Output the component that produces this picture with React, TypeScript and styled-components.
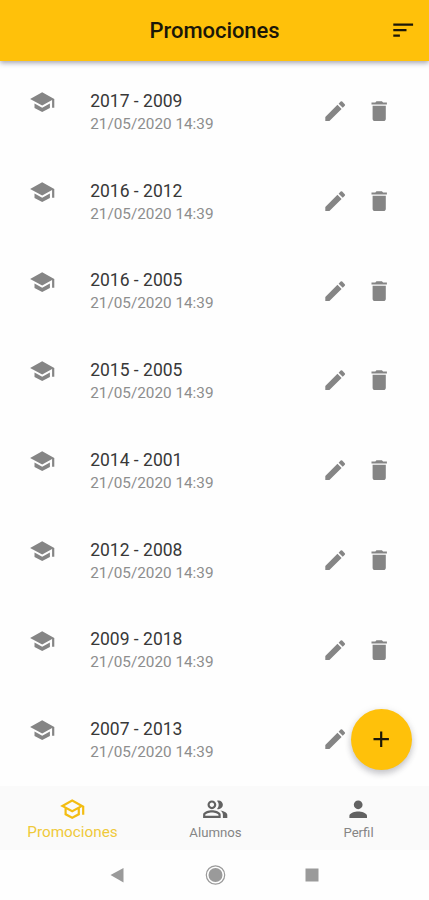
import React from "react";
import styled, { createGlobalStyle } from "styled-components";

const Global = createGlobalStyle`
  *, *::before, *::after { box-sizing: border-box; }
  body { margin: 0; background: #fff; font-family: Roboto, "Liberation Sans", sans-serif; }
  button { border: 0; padding: 0; margin: 0; background: none; font: inherit; color: inherit; }
`;

const Screen = styled.div`
  position: relative;
  display: flex;
  flex-direction: column;
  width: 429px;
  height: 900px;
  overflow: hidden;
  background: #fefefe;
`;

const AppBar = styled.header`
  position: relative;
  z-index: 1;
  flex: none;
  height: 61px;
  padding: 0 12.5px 0 39px;
  display: grid;
  grid-template-columns: 1fr 26.4px;
  align-items: center;
  background: #ffc10a;
  box-shadow: 0 2px 5px rgba(40, 40, 70, 0.42);
  color: #1b1708;
`;

const Title = styled.h1`
  margin: 0;
  text-align: center;
  font-size: 22px;
  font-weight: 500;
  line-height: 26px;
  letter-spacing: -0.05px;
`;

const Icon = styled.svg<{ $size?: number }>`
  display: block;
  flex: none;
  width: ${(p) => p.$size ?? 26.4}px;
  height: ${(p) => p.$size ?? 26.4}px;
  fill: currentColor;
`;

const List = styled.main`
  flex: none;
  height: 724.5px;
  padding-top: 5.2px;
  overflow: hidden;
`;

const Row = styled.article`
  height: 89.75px;
  padding: 23px 36.6px 0 29px;
  display: grid;
  grid-template-columns: 61.2px 1fr auto;
  align-items: start;
  color: #858585;
`;

const Texts = styled.div`
  padding-top: 0.6px;
`;

const Name = styled.div`
  font-size: 17.5px;
  line-height: 22px;
  color: #383838;
`;

const Stamp = styled.div`
  font-size: 15.3px;
  line-height: 24px;
  color: #8d8d8d;
`;

const Actions = styled.div`
  display: flex;
  gap: 17.4px;
  padding-top: 9px;
`;

const Tabs = styled.nav`
  flex: none;
  height: 64px;
  padding: 10.3px 0 0 1px;
  display: grid;
  grid-template-columns: repeat(3, 143px);
  background: #fafafa;
`;

const Tab = styled.button<{ $active?: boolean }>`
  display: flex;
  flex-direction: column;
  align-items: center;
  justify-content: flex-start;
  gap: ${(p) => (p.$active ? 1 : 2)}px;
  color: ${(p) => (p.$active ? "#f3bd12" : "#626262")};
`;

const TabLabel = styled.span<{ $active?: boolean }>`
  font-size: ${(p) => (p.$active ? 15.3 : 13.2)}px;
  line-height: 18px;
  color: ${(p) => (p.$active ? "#efc93a" : "#858585")};
`;

const SystemBar = styled.footer`
  flex: 1;
  display: flex;
  justify-content: center;
  align-items: center;
  gap: 75px;
  color: #9a9a9a;
`;

const Fab = styled.button`
  position: absolute;
  left: 351px;
  top: 709px;
  width: 61px;
  height: 61px;
  border-radius: 50%;
  display: flex;
  align-items: center;
  justify-content: center;
  background: #ffc10a;
  color: #1b1708;
  box-shadow: 0 4px 6px rgba(40, 40, 60, 0.22), 0 1px 8px rgba(0, 0, 0, 0.08);
`;

const paths = {
  school: "M5 13.18v4L12 21l7-3.82v-4L12 17l-7-3.82zM12 3L1 9l11 6 9-4.91V17h2V9L12 3z",
  schoolOutline:
    "M12 3L1 9l4 2.18v6L12 21l7-3.82v-6l2-1.09V17h2V9L12 3zm6.82 6L12 12.72 5.18 9 12 5.28 18.82 9zM17 15.99l-5 2.73-5-2.73v-3.72L12 15l5-2.73v3.72z",
  edit: "M3 17.25V21h3.75L17.81 9.94l-3.75-3.75L3 17.25zM20.71 7.04a.996.996 0 0 0 0-1.41l-2.34-2.34a.996.996 0 0 0-1.41 0l-1.83 1.83 3.75 3.75 1.83-1.83z",
  trash: "M6 19c0 1.1.9 2 2 2h8c1.1 0 2-.9 2-2V7H6v12zM19 4h-3.5l-1-1h-5l-1 1H5v2h14V4z",
  sort: "M3 18h6v-2H3v2zM3 6v2h18V6H3zm0 7h12v-2H3v2z",
  people:
    "M16.67 13.13C18.04 14.06 19 15.32 19 17v3h4v-3c0-2.18-3.57-3.47-6.33-3.87zM15 12c2.21 0 4-1.79 4-4s-1.79-4-4-4c-.47 0-.91.1-1.33.24a5.98 5.98 0 0 1 0 7.52c.42.14.86.24 1.33.24zM9 12c2.21 0 4-1.79 4-4s-1.79-4-4-4-4 1.79-4 4 1.79 4 4 4zm0-6c1.1 0 2 .9 2 2s-.9 2-2 2-2-.9-2-2 .9-2 2-2zM9 13c-2.67 0-8 1.34-8 4v3h16v-3c0-2.66-5.33-4-8-4zm6 5H3v-.99C3.2 16.29 6.3 15 9 15s5.8 1.29 6 2v1z",
  person:
    "M12 12c2.21 0 4-1.79 4-4s-1.79-4-4-4-4 1.79-4 4 1.79 4 4 4zm0 2c-2.67 0-8 1.34-8 4v2h16v-2c0-2.66-5.33-4-8-4z",
  add: "M19 13h-6v6h-2v-6H5v-2h6V5h2v6h6v2z",
};

const Glyph = ({ name, size }: { name: keyof typeof paths; size?: number }) => (
  <Icon viewBox="0 0 24 24" $size={size} aria-hidden="true">
    <path d={paths[name]} />
  </Icon>
);

const promotions = [
  "2017 - 2009",
  "2016 - 2012",
  "2016 - 2005",
  "2015 - 2005",
  "2014 - 2001",
  "2012 - 2008",
  "2009 - 2018",
  "2007 - 2013",
];

const tabs: { label: string; icon: keyof typeof paths; active?: boolean }[] = [
  { label: "Promociones", icon: "schoolOutline", active: true },
  { label: "Alumnos", icon: "people" },
  { label: "Perfil", icon: "person" },
];

export default function App() {
  return (
    <>
      <Global />
      <Screen>
        <AppBar>
          <Title>Promociones</Title>
          <button aria-label="Ordenar">
            <Glyph name="sort" />
          </button>
        </AppBar>
        <List>
          {promotions.map((name) => (
            <Row key={name}>
              <Glyph name="school" />
              <Texts>
                <Name>{name}</Name>
                <Stamp>21/05/2020 14:39</Stamp>
              </Texts>
              <Actions>
                <button aria-label="Editar">
                  <Glyph name="edit" />
                </button>
                <button aria-label="Eliminar">
                  <Glyph name="trash" />
                </button>
              </Actions>
            </Row>
          ))}
        </List>
        <Tabs>
          {tabs.map((t) => (
            <Tab key={t.label} $active={t.active}>
              <Glyph name={t.icon} />
              <TabLabel $active={t.active}>{t.label}</TabLabel>
            </Tab>
          ))}
        </Tabs>
        <SystemBar>
          <Icon viewBox="0 0 22 22" $size={22}>
            <path d="M3.5 11 16.5 4v14.5z" />
          </Icon>
          <Icon viewBox="0 0 22 22" $size={22}>
            <circle cx="11.5" cy="11" r="9.2" fill="none" stroke="currentColor" strokeWidth="1.2" />
            <circle cx="11.5" cy="11" r="7" />
          </Icon>
          <Icon viewBox="0 0 22 22" $size={22}>
            <path d="M4.5 4.5h13v13h-13z" />
          </Icon>
        </SystemBar>
        <Fab aria-label="Añadir">
          <Glyph name="add" />
        </Fab>
      </Screen>
    </>
  );
}
